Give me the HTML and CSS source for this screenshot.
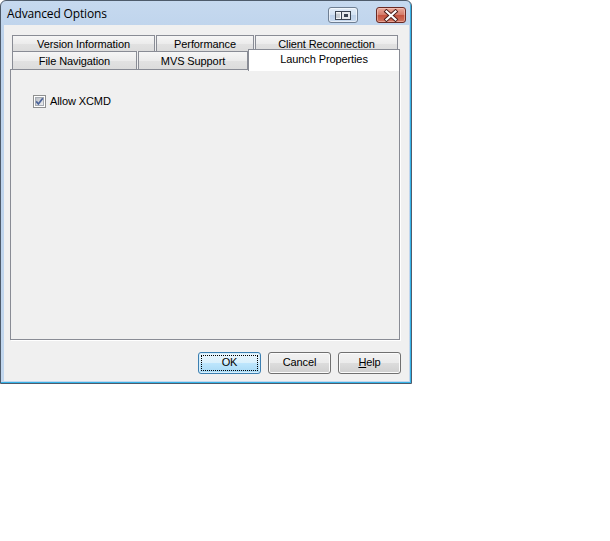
FILE: index.html
```html
<!DOCTYPE html>
<html>
<head>
	<title>Advanced Options</title>
	<link rel="stylesheet" href="styles.css">
</head>
<body>
	<div class="window">
		<div class="titlebar">
			<span class="title">Advanced Options</span>
			<div class="caption_buttons">
				<div class="cap_btn cap_extra">
					<svg width="28" height="13" viewBox="0 0 28 13">
						<rect x="6.5" y="2.5" width="15" height="8" fill="#f2f4f6" stroke="#3a4350"/>
						<line x1="8" y1="4.5" x2="8" y2="9" stroke="#9aa3ad"/>
						<line x1="10" y1="4.5" x2="10" y2="9" stroke="#9aa3ad"/>
						<rect x="12.5" y="2.5" width="9" height="8" fill="#e6e9ec" stroke="#3a4350"/>
						<rect x="15" y="5" width="4" height="3" fill="#3a4350"/>
					</svg>
				</div>
				<div class="cap_btn cap_close">
					<svg width="28" height="13" viewBox="0 0 28 13">
						<path d="M9.5 2.5 L18.5 10.5 M18.5 2.5 L9.5 10.5" stroke="#4a1c18" stroke-width="4" stroke-linecap="square"/>
						<path d="M9.5 2.5 L18.5 10.5 M18.5 2.5 L9.5 10.5" stroke="#ffffff" stroke-width="2.2" stroke-linecap="square"/>
					</svg>
				</div>
			</div>
		</div>

		<div class="client">
			<div class="tab_row row_back">
				<div class="tab w_version">Version Information</div>
				<div class="tab w_perf">Performance</div>
				<div class="tab w_client">Client Reconnection</div>
			</div>
			<div class="tab_row row_front">
				<div class="tab w_file">File Navigation</div>
				<div class="tab w_mvs">MVS Support</div>
				<div class="tab selected">Launch Properties</div>
			</div>

			<div class="panel">
				<label class="check">
					<span class="box">
						<svg width="13" height="13" viewBox="0 0 13 13">
							<defs>
								<linearGradient id="boxfill" x1="0" y1="0" x2="1" y2="1">
									<stop offset="0" stop-color="#b7bcc3"/>
									<stop offset="1" stop-color="#f2f2f3"/>
								</linearGradient>
							</defs>
							<rect x="0.5" y="0.5" width="12" height="12" fill="#ffffff" stroke="#8e8f8f"/>
							<rect x="2.5" y="2.5" width="8" height="8" fill="url(#boxfill)" stroke="#a6abb2"/>
							<path d="M3.2 6.4 L5.4 9 L9.8 3.2" fill="none" stroke="#4b639a" stroke-width="1.7"/>
						</svg>
					</span>
					Allow XCMD
				</label>
			</div>

			<div class="buttons">
				<div class="btn default"><span class="focus">OK</span></div>
				<div class="btn">Cancel</div>
				<div class="btn"><u>H</u>elp</div>
			</div>
		</div>
	</div>
</body>
</html>
```

FILE: styles.css
```css
* {
	margin: 0;
	box-sizing: border-box;
}
body {
	background: #ffffff;
	font-family: "Liberation Sans", Arial, sans-serif;
	font-size: 11px;
	line-height: 13px;
	letter-spacing: -0.1px;
	color: #000000;
}

/* window frame */
div.window {
	width: 412px;
	height: 384px;
	display: flex;
	flex-direction: column;
	padding: 0 2px 2px 3px;
	border: 1px solid #4e5b6b;
	border-radius: 6px 6px 0 0;
	background: linear-gradient(#c6d9ef, #bcd2eb 40px, #c2d7ee);
	box-shadow: inset -1px -1px 0 #35b3e8;
}

/* title bar */
div.titlebar {
	height: 24px;
	display: flex;
	align-items: flex-start;
	padding: 0 3px 0 3px;
}
span.title {
	margin-top: 5px;
	font-family: "Open Sans", "Noto Sans", sans-serif;
	font-size: 12px;
	line-height: 16px;
	letter-spacing: -0.15px;
	color: #000000;
}
div.caption_buttons {
	margin-left: auto;
	margin-top: 6px;
	display: flex;
	gap: 18px;
}
div.cap_btn {
	width: 30px;
	height: 16px;
	border-radius: 3px;
	display: flex;
	align-items: center;
	justify-content: center;
}
div.cap_extra {
	border: 1px solid #6f7f93;
	background: linear-gradient(#e3edf8, #d2e1f2 50%, #bdd1e9 50%, #c9daef);
	box-shadow: inset 0 0 0 1px rgba(255, 255, 255, .55);
}
div.cap_close {
	border: 1px solid #6a2a24;
	background: linear-gradient(#e9a99b, #d47a68 50%, #c4503c 50%, #d17560);
	box-shadow: inset 0 0 0 1px rgba(255, 220, 210, .45);
}

/* client area */
div.client {
	flex: 1;
	background: #f0f0f0;
	padding: 10px 8px 0 6px;
	display: flex;
	flex-direction: column;
}

/* tabs */
div.tab_row {
	display: flex;
	gap: 1px;
	margin-left: 2px;
	align-items: flex-start;
}
div.row_back {
	height: 16px;
}
div.row_front {
	height: 18px;
}
div.tab {
	border: 1px solid #898c95;
	border-bottom: none;
	background: linear-gradient(#f6f6f6, #ececec 50%, #e2e2e2 51%, #dcdcdc);
	text-align: center;
	white-space: nowrap;
}
div.row_back div.tab {
	height: 16px;
	padding-top: 2px;
}
div.row_front div.tab {
	height: 18px;
	padding-top: 3px;
}
div.w_version { width: 143px; }
div.w_perf { width: 98px; }
div.w_client { width: 143px; }
div.w_file { width: 125px; }
div.w_mvs { width: 110px; }
div.tab_row div.selected {
	position: relative;
	z-index: 1;
	width: 152px;
	height: 22px;
	margin-top: -2px;
	margin-left: -1px;
	padding-top: 3px;
	background: #ffffff;
	border-color: #898c95;
}

/* panel */
div.panel {
	width: 390px;
	height: 271px;
	border: 1px solid #898c95;
	background: #f0f0f0;
	box-shadow: 1px 1px 0 #ffffff;
	padding: 25px 0 0 22px;
}
label.check {
	display: flex;
	align-items: center;
	gap: 4px;
}
span.box {
	width: 13px;
	height: 13px;
	display: block;
}
span.box svg {
	display: block;
}

/* dialog buttons */
div.buttons {
	margin-top: 12px;
	display: flex;
	justify-content: flex-end;
	gap: 7px;
}
div.btn {
	width: 63px;
	height: 22px;
	padding-bottom: 1px;
	border: 1px solid #707070;
	border-radius: 3px;
	background: linear-gradient(#f2f2f2, #ebebeb 50%, #dddddd 50%, #cfcfcf);
	box-shadow: inset 0 0 0 1px #fbfbfb;
	display: flex;
	align-items: center;
	justify-content: center;
}
div.btn u {
	text-decoration: underline;
}
div.default {
	border-color: #3c7fb1;
	background: linear-gradient(#eaf6fd, #d9f0fc 50%, #bee6fd 50%, #a7d9f5);
	box-shadow: inset 0 0 0 1px #d6eefb;
	padding: 2px;
}
span.focus {
	width: 100%;
	height: 100%;
	padding-bottom: 1px;
	border: 1px dotted #000000;
	display: flex;
	align-items: center;
	justify-content: center;
}
```
